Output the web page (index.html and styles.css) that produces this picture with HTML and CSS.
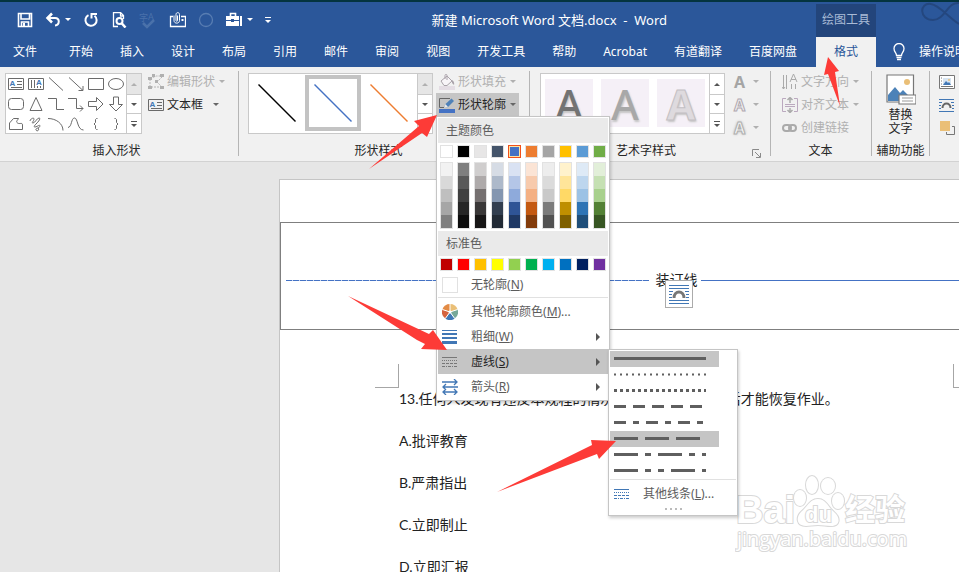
FILE: index.html
```html
<!DOCTYPE html>
<html lang="zh-CN">
<head>
  <meta charset="UTF-8">
  <title>新建 Microsoft Word 文档.docx - Word</title>
  <meta name="viewport" content="width=device-width, initial-scale=1.0">
  <link rel="stylesheet" href="styles.css">
</head>
<body>
  <header class="titlebar">
    <div class="quick-access">
      <button aria-label="保存"><svg width="16" height="16"><path d="M2 1.500h12.500v13H1.500V1.500z M4 2v5h8.500V2 M4.500 14v-4h7v4" fill="none" stroke="#fff" stroke-width="1.600"/><path d="M6 11h2v3H6z" fill="#fff"/></svg></button>
      <button aria-label="撤消"><svg width="16" height="16"><path d="M2.500 6H10c5 0 5 7 0 7.500" fill="none" stroke="#fff" stroke-width="2"/><path d="M7 1.500L2.500 6 7 10.500" fill="none" stroke="#fff" stroke-width="2.500"/></svg><i class="caret"></i></button>
      <button aria-label="重复"><svg width="16" height="16"><path d="M5.500 3.200a5.600 5.600 0 1 0 6 .6" fill="none" stroke="#fff" stroke-width="2"/><path d="M8.500 1v5.500M8 2h6" fill="none" stroke="#fff" stroke-width="2"/></svg></button>
      <button aria-label="打印预览"><svg width="16" height="16"><path d="M7 14.500H2.500v-14h7l3 3V7M9.500.500v3.500h3" fill="none" stroke="#fff" stroke-width="1.300"/><circle cx="8.500" cy="9" r="3" fill="none" stroke="#fff" stroke-width="2"/><path d="M10.500 11l4 4.500" stroke="#fff" stroke-width="2.500"/></svg></button>
      <button class="dim" aria-label="拼写检查"><svg width="18" height="18"><text x="0" y="10" font-size="9" fill="#587db2">字</text><text x="9" y="9" font-size="9" fill="#587db2">A</text><path d="M4 12l4 4 7-7" fill="none" stroke="#587db2" stroke-width="2.500"/></svg></button>
      <button aria-label="附件"><svg width="17" height="16"><path d="M4 4.500H1.500v10h15v-10H12" fill="none" stroke="#fff" stroke-width="1.300"/><path d="M5 3.500v5c0 3.500 5.500 3.500 5.500 0V2.500c0-2.500-3.500-2.500-3.500 0v6c0 1 1.500 1 1.500 0v-5" fill="none" stroke="#fff"/><path d="M12.500 7h2v2h-2z" fill="#fff"/></svg></button>
      <button aria-label="录制"><svg width="16" height="16"><circle cx="8" cy="8" r="6.500" fill="none" stroke="#587db2" stroke-width="1.300"/></svg></button>
      <button aria-label="工具箱"><svg width="17" height="16"><path d="M4.500 4V1.500h5V4" fill="none" stroke="#fff" stroke-width="1.600"/><path d="M0 4h13v4H8V7H5v1H0zM0 9h5v1h3V9h5v5H0zM14 4h2v10h-2z" fill="#fff"/></svg><i class="caret"></i></button>
      <button aria-label="自定义快速访问工具栏"><i class="more"></i></button>
    </div>
    <h1 class="doc-title">新建 Microsoft Word 文档.docx&nbsp; -&nbsp; Word</h1>
    <svg class="flourish" width="40" height="24"><path d="M40 1C28 0 26 18 14 18 0 18 0 0 12 2c8 1 16 12 28 20" fill="none" stroke="#24477f" stroke-width="2"/></svg>
  </header>

  <nav class="tabs">
    <button class="tab tab-file">文件</button>
    <button class="tab">开始</button>
    <button class="tab">插入</button>
    <button class="tab">设计</button>
    <button class="tab">布局</button>
    <button class="tab">引用</button>
    <button class="tab">邮件</button>
    <button class="tab">审阅</button>
    <button class="tab">视图</button>
    <button class="tab">开发工具</button>
    <button class="tab">帮助</button>
    <button class="tab">Acrobat</button>
    <button class="tab">有道翻译</button>
    <button class="tab">百度网盘</button>
    <div class="context">
      <span class="context-title">绘图工具</span>
      <button class="tab tab-active">格式</button>
    </div>
    <button class="tab tell-me"><svg width="12" height="18"><path d="M3.500 12.500c0-3-2.500-3.500-2.500-7a5 5 0 0 1 10 0c0 3.500-2.500 4-2.500 7zM3.500 14.500h5M4 16.500h4" fill="none" stroke="#fff" stroke-width="1.300"/></svg>操作说明搜索</button>
  </nav>

  <section class="ribbon">
    <div class="group group-first">
      <div class="group-body">
        <div class="gallery">
          <div class="shapes">
            <button aria-label="文本框"><svg width="16" height="16"><path d="M.500 2.500h15v11H.500zM9 5.500h5M9 8.500h5M3 11.500h11" class="ln"/><text x="1.500" y="10" class="mini">A</text></svg></button>
            <button aria-label="竖排文本框"><svg width="16" height="16"><path d="M.500 2.500h15v11H.500zM3.500 4v8M6.500 4v8M9.500 10v2M12.500 10v2" class="ln"/><text x="8" y="9" class="mini">A</text></svg></button>
            <button aria-label="直线"><svg width="16" height="16"><path d="M1 1.500l14 13" class="ln"/></svg></button>
            <button aria-label="箭头"><svg width="16" height="16"><path d="M1 1.500l14 13M15 10v4.500h-4.500" class="ln"/></svg></button>
            <button aria-label="矩形"><svg width="16" height="16"><path d="M.500 2.500h15v11H.500z" class="ln"/></svg></button>
            <button aria-label="椭圆"><svg width="16" height="16"><ellipse cx="8" cy="8" rx="7.500" ry="5.500" class="ln"/></svg></button>
            <button aria-label="圆角矩形"><svg width="16" height="16"><rect x=".500" y="2.500" width="15" height="11" rx="3" class="ln"/></svg></button>
            <button aria-label="三角形"><svg width="16" height="16"><path d="M8 1.500l6 13H2z" class="ln"/></svg></button>
            <button aria-label="肘形连接符"><svg width="16" height="16"><path d="M0 2.500h8.500v11H16" class="ln"/></svg></button>
            <button aria-label="肘形箭头"><svg width="16" height="16"><path d="M0 2.500h8.500v10H15M12 9.500l3 3-3 3" class="ln"/></svg></button>
            <button aria-label="右箭头"><svg width="16" height="16"><path d="M.500 5.500h8v-4L15 8l-6.500 6.500v-4h-8z" class="ln"/></svg></button>
            <button aria-label="下箭头"><svg width="16" height="16"><path d="M5.500 1v7.500h-4L8 15l6.500-6.500h-4V1z" class="ln"/></svg></button>
            <button aria-label="任意多边形"><svg width="16" height="16"><path d="M1.500 13.500V7l4-4.500h5c-1 2-3 3-1 4.500s5-1 5 2v4.500z" class="ln"/></svg></button>
            <button aria-label="自由曲线"><svg width="16" height="16"><path d="M2 5c0-2 4-4 4-2S3 7 5 7s4-5 6-5 0 3-2 5-4 4-2 4 5-3 5-1-5 2-4 4 4 0 2-2" class="ln"/></svg></button>
            <button aria-label="弧形"><svg width="16" height="16"><path d="M0 2.500c8 0 15 5 15 12" class="ln"/></svg></button>
            <button aria-label="曲线"><svg width="16" height="16"><path d="M0 11.500C4 11 3 2 6.500 2S9 14 15.500 14" class="ln"/></svg></button>
            <button aria-label="左大括号"><svg width="16" height="16"><path d="M9.500 2.500h-1l-1 1v3L6 8l1.500 1.500v3l1 1h1" class="ln"/></svg></button>
            <button aria-label="右大括号"><svg width="16" height="16"><path d="M6.500 2.500h1l1 1v3L10 8 8.500 9.500v3l-1 1h-1" class="ln"/></svg></button>
          </div>
          <div class="scroller"><button class="off" aria-label="上一行"><i class="up"></i></button><button aria-label="下一行"><i class="caret"></i></button><button aria-label="其他"><i class="more"></i></button></div>
        </div>
        <div class="tools">
          <button class="tool" disabled><svg width="16" height="16"><path d="M2 4.500L8.500 2H14M14 3L9 8l5 5M2 5v8h11" fill="none" stroke="#b5b5b5" stroke-dasharray="2 1"/><path d="M0 3h4v3H0zM4 0h3v3H4zM12 0h4v3h-4zM7 6h3v3H7zM0 12h4v3H0zM12 12h4v3h-4z" fill="#b0b0b0"/></svg><span>编辑形状</span><i class="caret"></i></button>
          <button class="tool"><svg width="16" height="16"><path d="M.500 2.500h15v11H.500zM9 5.500h5M9 8.500h5M3 11.500h11" class="ln"/><text x="1.500" y="10" class="mini">A</text></svg><span>文本框</span><i class="caret"></i></button>
        </div>
      </div>
      <div class="group-label"><span>插入形状</span></div>
    </div>
    <i class="sep"></i>

    <div class="group group-styles">
      <div class="group-body">
        <div class="gallery">
          <button class="line-style" aria-label="细线 - 深色"><svg width="40" height="40"><path d="M1.500 1.500l37 37" stroke="#000" stroke-width="1.400"/></svg></button>
          <button class="line-style picked" aria-label="细线 - 蓝色"><svg width="40" height="40"><path d="M1.500 1.500l37 37" stroke="#4472c4" stroke-width="1.400"/></svg></button>
          <button class="line-style" aria-label="细线 - 橙色"><svg width="40" height="40"><path d="M1.500 1.500l37 37" stroke="#ed7d31" stroke-width="1.400"/></svg></button>
          <div class="scroller"><button class="off" aria-label="上一行"><i class="up"></i></button><button aria-label="下一行"><i class="caret"></i></button><button aria-label="其他"><i class="more"></i></button></div>
        </div>
        <div class="tools">
          <button class="tool" disabled><svg width="16" height="16"><path d="M0 12h16v4H0z" fill="#e4dde4"/><path d="M2 7l6-5 5 5-5 4.500H5zM6 5V1.500c0-1.500 2-1.500 2 0V6" fill="#f8f5f8" stroke="#aaa3aa"/><path d="M13 6c2 1 2.500 3 2 5l-2-2z" fill="#aaa3aa"/></svg><span>形状填充</span><i class="caret"></i></button>
          <div class="outline">
            <button class="tool tool-open"><svg width="16" height="16"><path d="M11 1.500H.500v9H5" fill="none" stroke="#666"/><path d="M0 12h16v4H0z" fill="#4472c4"/><path d="M5 11l1.500-4 6-5.500 2.500 2.500-6 6z" fill="#4f81b8"/><path d="M5 11l1.500-4L9 10z" fill="#e8e8e8"/></svg><span>形状轮廓</span><i class="caret"></i></button>

            <div class="menu">
              <div class="menu-head">主题颜色</div>
              <div class="swatches" id="theme"></div>
              <div class="swatches shades" id="shades"></div>
              <div class="menu-head">标准色</div>
              <div class="swatches" id="standard"></div>
              <button class="menu-item"><i class="empty-box"></i><span>无轮廓(<u>N</u>)</span></button>
              <hr>
              <button class="menu-item"><svg width="16" height="16"><path d="M8 8V0a8 8 0 0 1 7.600 5.500z" fill="#eabf77"/><path d="M8 8l7.600-2.500a8 8 0 0 1-2.900 9z" fill="#77a898"/><path d="M8 8l4.700 6.500a8 8 0 0 1-9.400 0z" fill="#4177b5"/><path d="M8 8l-4.700 6.500a8 8 0 0 1-2.900-9z" fill="#d5633f"/><path d="M8 8L.400 5.500A8 8 0 0 1 8 0z" fill="#e38b45"/><path d="M8 8V0M8 8l7.600-2.500M8 8l4.700 6.500M8 8l-4.700 6.500M8 8L.400 5.500" stroke="#fff"/><circle cx="8" cy="8" r="1.500" fill="#fff"/></svg><span>其他轮廓颜色(<u>M</u>)...</span></button>
              <button class="menu-item"><svg width="16" height="16"><path d="M0 1h15v1H0zM0 4h15v2H0zM0 8h15v2H0zM0 12h15v3H0z" fill="#4177b5"/></svg><span>粗细(<u>W</u>)</span><i class="next"></i></button>
              <div class="dash-row">
                <button class="menu-item menu-item-open"><svg width="16" height="16"><path d="M0 3.500h15" stroke="#777"/><path d="M0 6.500h15" stroke="#777" stroke-dasharray="1 1"/><path d="M0 9.500h15" stroke="#777" stroke-dasharray="3 1"/><path d="M0 12.500h15" stroke="#777" stroke-dasharray="3 1 1 1"/></svg><span>虚线(<u>S</u>)</span><i class="next"></i></button>
                <div class="menu submenu">
                  <button class="dash dash-on" aria-label="实线"><svg width="92" height="4"><path d="M0 1.500h92"/></svg></button>
                  <button class="dash" aria-label="圆点"><svg width="92" height="4"><path d="M0 1.500h92" class="thin" stroke-dasharray="2 4"/></svg></button>
                  <button class="dash" aria-label="方点"><svg width="92" height="4"><path d="M0 1.500h92" stroke-dasharray="3 3"/></svg></button>
                  <button class="dash" aria-label="短划线"><svg width="92" height="4"><path d="M0 1.500h92" stroke-dasharray="12 7"/></svg></button>
                  <button class="dash" aria-label="划线-点"><svg width="92" height="4"><path d="M0 1.500h92" stroke-dasharray="12 7 6 7"/></svg></button>
                  <button class="dash dash-on" aria-label="长划线"><svg width="92" height="4"><path d="M0 1.500h92" stroke-dasharray="24 7"/></svg></button>
                  <button class="dash" aria-label="长划线-点"><svg width="92" height="4"><path d="M0 1.500h92" stroke-dasharray="24 7 6 7"/></svg></button>
                  <button class="dash" aria-label="长划线-点-点"><svg width="92" height="4"><path d="M0 1.500h92" stroke-dasharray="24 7 6 7 6 7"/></svg></button>
                  <hr>
                  <button class="menu-item"><svg width="16" height="16"><path d="M0 3.500h15" stroke="#4177b5"/><path d="M0 6.500h15" stroke="#4177b5" stroke-dasharray="1 1"/><path d="M0 9.500h15" stroke="#4177b5" stroke-dasharray="3 1"/><path d="M0 12.500h15" stroke="#4177b5" stroke-dasharray="3 1 1 1"/></svg><span>其他线条(<u>L</u>)...</span></button>
                  <div class="grip"></div>
                </div>
              </div>
              <button class="menu-item"><svg width="16" height="16"><path d="M0 3h15M1 8h15M1 13h14M12 0l3 3-3 3M4 5L1 8l3 3M12 10l3 3-3 3M4 10l-3 3 3 3" fill="none" stroke="#4177b5" stroke-width="1.300"/></svg><span>箭头(<u>R</u>)</span><i class="next"></i></button>
            </div>
          </div>
        </div>
      </div>
      <div class="group-label"><span>形状样式</span><i class="launcher"></i></div>
    </div>
    <i class="sep"></i>

    <div class="group group-art">
      <div class="group-body">
        <div class="gallery">
          <button class="art art-dark">A</button>
          <button class="art art-mid">A</button>
          <button class="art art-light">A</button>
          <div class="scroller"><button aria-label="上一行"><i class="up"></i></button><button aria-label="下一行"><i class="caret"></i></button><button aria-label="其他"><i class="more"></i></button></div>
        </div>
        <div class="tools">
          <button class="tool" disabled><b class="letter">A</b><i class="caret"></i></button>
          <button class="tool" disabled><b class="letter letter-line">A</b><i class="caret"></i></button>
          <button class="tool" disabled><b class="letter letter-glow">A</b><i class="caret"></i></button>
        </div>
      </div>
      <div class="group-label"><span>艺术字样式</span><i class="launcher"><svg width="9" height="9"><path d="M.500 7V.500H7M3 3l5 5M8.500 4v4.500H4" fill="none" stroke="#8a8a8a"/></svg></i></div>
    </div>
    <i class="sep"></i>

    <div class="group group-text">
      <div class="group-body">
        <div class="tools">
          <button class="tool" disabled><svg width="16" height="16"><path d="M1.500 1v14M4.500 1v14M9.500 10v5M13.500 10v5M0 13l1.500 2L3 13M8 8l3.500-8L15 8M9 5.500h5" fill="none" stroke="#aaa"/></svg><span>文字方向</span><i class="caret"></i></button>
          <button class="tool" disabled><svg width="16" height="16"><path d="M4 1.500H.500v13H4M12 1.500h3.500v13H12M3 7.500h10M3 9.500h10" fill="none" stroke="#bba9bf"/><path d="M8 0v6M5.500 3L8 .500 10.500 3M8 11v5M5.500 13L8 15.500l2.500-2.500" fill="none" stroke="#aaa" stroke-width="1.500"/></svg><span>对齐文本</span><i class="caret"></i></button>
          <button class="tool" disabled><svg width="16" height="16"><rect x="1" y="5" width="8" height="6" rx="3" fill="none" stroke="#aaa" stroke-width="2"/><rect x="7" y="5" width="7" height="6" rx="3" fill="none" stroke="#aaa" stroke-width="2"/></svg><span>创建链接</span></button>
        </div>
      </div>
      <div class="group-label"><span>文本</span></div>
    </div>
    <i class="sep"></i>

    <div class="group group-alt">
      <div class="group-body">
        <button class="big-tool"><svg width="30" height="32"><path d="M1 1h26.500v27H1z" fill="#fff" stroke="#777" stroke-width="1.200"/><circle cx="21" cy="8" r="3" fill="#eabf77"/><path d="M2 27v-6l7-8 5 6 3-3 5 5v6z" fill="#4c82b8"/><path d="M13 21h17v9H13z" fill="#fff" stroke="#777" stroke-width="1.200"/><path d="M16 24h11M16 27h11" stroke="#999"/></svg><span>替换<br>文字</span></button>
      </div>
      <div class="group-label"><span>辅助功能</span></div>
    </div>
    <i class="sep"></i>

    <div class="group group-arrange">
      <div class="group-body">
        <div class="tools">
          <button class="tool" aria-label="位置"><svg width="16" height="16"><path d="M.500 1.500h15v13H.500z" fill="#fff" stroke="#777"/><path d="M4 4h8v7H4z" fill="#d7e4f1"/><path d="M4 11l3-4 2 2 1-1 2 3z" fill="#4177b5"/><circle cx="10" cy="6" r="1" fill="#eabf77"/><path d="M2 4h1M2 7h1M2 10h1M2 12.500h12" stroke="#777"/></svg></button>
          <button class="tool" aria-label="环绕文字"><svg width="16" height="16"><path d="M0 2.500h15M0 5.500h3M12 5.500h3M0 8.500h2M13 8.500h2M0 11.500h2M13 11.500h2M0 14.500h15" stroke="#4177b5"/><path d="M3.500 11c0-6 8-6 8 0" fill="none" stroke="#666" stroke-width="2"/></svg></button>
          <button class="tool" aria-label="上移一层"><svg width="16" height="16"><path d="M1 1h10v10H1z" fill="#eabf77"/><path d="M13 6.500h2.500v8h-8V12" fill="none" stroke="#777"/></svg></button>
        </div>
      </div>
    </div>
  </section>

  <main class="workspace">
    <article class="page">
      <div class="seal">
        <i class="seal-dash"></i>
        <span class="seal-text">装订线<button class="layout-options" aria-label="布局选项"><svg width="20" height="20"><path d="M0 1.500h20M0 4.500h20M0 7.500h4M16 7.500h4M0 10.500h3M17 10.500h3M0 13.500h3M17 13.500h3M0 16.500h20M0 19.500h20" stroke="#4177b5"/><path d="M5 14c0-8 10-8 10 0" fill="none" stroke="#777" stroke-width="3"/></svg></button></span>
        <i class="seal-line"></i>
      </div>
      <div class="crop-marks"><i class="mark-left"></i><i class="mark-right"></i></div>
      <div class="question">
        <p>13.任何人发现有违反本规程的情况，应（&nbsp;&nbsp;），经纠正后才能恢复作业。</p>
        <p>A.批评教育</p>
        <p>B.严肃指出</p>
        <p>C.立即制止</p>
        <p>D.立即汇报</p>
      </div>
    </article>
  </main>

  <svg class="watermark" width="180" height="88">
    <g class="wm">
      <text x="1" y="55" class="wm-latin">Bai</text>
      <ellipse cx="65" cy="30" rx="6" ry="8"/><ellipse cx="77" cy="17" rx="6" ry="9"/><ellipse cx="93" cy="18" rx="7" ry="8"/><ellipse cx="103" cy="33" rx="6" ry="8"/>
      <path d="M83 31c8 0 10 8 16 13 7 6 6 14-3 14-5 0-8-1-13-1s-8 1-12 1c-10 0-10-9-5-14 7-6 9-13 17-13z"/>
      <text x="70" y="54" class="wm-du">du</text>
      <text x="110" y="52" class="wm-cjk">经验</text>
      <text x="2" y="78" class="wm-url">jingyan.baidu.com</text>
    </g>
  </svg>

  <svg class="arrows" width="959" height="572">
    <path d="M437 115L414 121l5 5-50 43 53-36 5 4z"/>
    <path d="M348 296l81 38 4-4 14 20-26-1 4-5-8-4z"/>
    <path d="M497 492l95-47-1-5 25 1-17 18-2-5z"/>
    <path d="M828 57l11 14-4 1 5 34-12-32-4 1z"/>
  </svg>

  <script>
    const theme = ['#ffffff', '#000000', '#e7e6e6', '#44546a', '#4472c4', '#ed7d31', '#a5a5a5', '#ffc000', '#5b9bd5', '#70ad47'];
    const standard = ['#c00000', '#ff0000', '#ffc000', '#ffff00', '#92d050', '#00b050', '#00b0f0', '#0070c0', '#002060', '#7030a0'];
    const shades = [
      ['#f2f2f2', '#d9d9d9', '#bfbfbf', '#a6a6a6', '#7f7f7f'],
      ['#7f7f7f', '#595959', '#404040', '#262626', '#0d0d0d'],
      ['#d0cece', '#aeaaaa', '#757070', '#3a3838', '#171616'],
      ['#d6dce5', '#adb9ca', '#8496b0', '#323e4f', '#222a35'],
      ['#d9e2f3', '#b4c6e7', '#8eaadb', '#2f5496', '#1f3864'],
      ['#fbe4d5', '#f7caac', '#f4b083', '#c45911', '#833c0b'],
      ['#ededed', '#dbdbdb', '#c9c9c9', '#7b7b7b', '#525252'],
      ['#fff2cc', '#ffe599', '#ffd966', '#bf8f00', '#7f6000'],
      ['#deeaf6', '#bdd6ee', '#9cc2e5', '#2e74b5', '#1f4e79'],
      ['#e2efd9', '#c5e0b3', '#a8d08d', '#538135', '#375623']
    ];

    function swatch(color) {
      const b = document.createElement('button');
      b.className = 'swatch';
      b.style.background = color;
      b.setAttribute('aria-label', color);
      return b;
    }

    theme.forEach(c => document.getElementById('theme').append(swatch(c)));
    standard.forEach(c => document.getElementById('standard').append(swatch(c)));
    document.getElementById('theme').children[4].classList.add('swatch-on');

    shades.forEach(list => {
      const col = document.createElement('div');
      col.className = 'shade-col';
      list.forEach(c => col.append(swatch(c)));
      document.getElementById('shades').append(col);
    });
  </script>
</body>
</html>
```

FILE: styles.css
```css
* {
  box-sizing: border-box;
}

body {
  margin: 0;
  height: 100vh;
  display: flex;
  flex-direction: column;
  overflow: hidden;
  position: relative;
  font-family: "Noto Sans", "Noto Sans CJK SC", sans-serif;
  font-size: 12px;
  line-height: 16px;
  color: #262626;
  background: #e6e6e6;
}

button {
  font: inherit;
  color: inherit;
  background: none;
  border: none;
  padding: 0;
  white-space: nowrap;
}

svg {
  display: block;
  flex: none;
}

.caret {
  border: 3px solid transparent;
  border-top-color: currentColor;
  border-bottom: none;
}

.up {
  border: 3px solid transparent;
  border-bottom-color: currentColor;
  border-top: none;
}

.more {
  border-top: 1px solid;
  padding-top: 2px;
}

.more::after {
  content: "";
  display: block;
  border: 3px solid transparent;
  border-top-color: currentColor;
  border-bottom: none;
}

/* title bar */
.titlebar {
  display: flex;
  align-items: center;
  flex: none;
  height: 37px;
  background: #2b579a;
  border-top: 2px solid #04343f;
  color: #fff;
  position: relative;
}

.quick-access {
  display: flex;
  align-items: center;
  gap: 12px;
  width: 45%;
  padding-left: 17px;
}

.quick-access button {
  display: flex;
  align-items: center;
  gap: 4px;
}

.dim {
  opacity: 0.7;
}

.doc-title {
  margin: 0;
  font-size: 13px;
  font-weight: normal;
}

.flourish {
  position: absolute;
  right: 0;
  top: 0;
}

/* tabs */
.tabs {
  display: flex;
  flex: none;
  gap: 1px;
  height: 30px;
  background: #2b579a;
  color: #fff;
}

.tab {
  flex: none;
  padding: 0 13px;
  height: 30px;
}

.tab-file {
  margin-right: 5px;
}

.context {
  position: relative;
  margin-left: 5px;
}

.context-title {
  position: absolute;
  bottom: 100%;
  left: 0;
  right: 0;
  height: 33px;
  line-height: 32px;
  text-align: center;
  white-space: nowrap;
  background: #23457b;
  color: #a9bbd6;
}

.tab-active {
  padding: 0 18px;
  background: #f1f1f1;
  color: #2b579a;
}

.tell-me {
  display: flex;
  align-items: center;
  gap: 14px;
  padding: 0 16px;
}

/* ribbon */
.ribbon {
  display: flex;
  flex: none;
  height: 95px;
  background: #f1f1f1;
  border-bottom: 1px solid #d2d2d2;
}

.group {
  display: flex;
  flex-direction: column;
  flex: none;
  padding: 3px 9px 0;
}

.group-first {
  padding: 3px 10px 0 5px;
}

.group-styles {
  padding: 3px 10px 0 9px;
}

.group-art {
  padding: 3px 8px 0 10px;
}

.group-text {
  padding: 3px 9px 0 8px;
}

.group-alt {
  padding: 3px 4px 0;
}

.group-body {
  display: flex;
  gap: 3px;
  height: 71px;
}

.group-art .group-body {
  gap: 6px;
}

.group-label {
  display: flex;
  line-height: 20px;
}

.group-label span {
  flex: 1;
  text-align: center;
}

.launcher {
  width: 10px;
  padding-top: 8px;
}

.sep {
  flex: none;
  width: 1px;
  margin: 4px 0 5px;
  background: #b5b5b5;
}

.gallery {
  display: flex;
  height: 61px;
  margin-top: 3px;
  background: #fff;
  border: 1px solid #c9c9c9;
}

.shapes {
  display: grid;
  grid-template-columns: repeat(6, 20px);
  grid-template-rows: repeat(3, 20px);
}

.shapes button {
  display: flex;
  align-items: center;
  justify-content: center;
}

.ln {
  fill: none;
  stroke: #6a6a6a;
}

.mini {
  font: bold 8px "Liberation Sans", sans-serif;
  fill: #4177b5;
}

.scroller {
  display: grid;
  grid-template-rows: 20px 19px 20px;
  width: 15px;
  margin-left: auto;
  border-left: 1px solid #c9c9c9;
  color: #555;
}

.scroller button {
  display: flex;
  align-items: center;
  justify-content: center;
}

.scroller button + button {
  border-top: 1px solid #c9c9c9;
}

.scroller .off {
  background: #e6e6e6;
  color: #b0b0b0;
}

.line-style {
  display: flex;
  align-items: center;
  justify-content: center;
  width: 56px;
  margin: 1px 0 2px;
}

.picked {
  border: 4px solid #c3c3c3;
}

.tools {
  display: flex;
  flex-direction: column;
}

.tool {
  display: flex;
  align-items: center;
  gap: 3px;
  height: 23px;
  padding: 0 3px;
}

.tool span {
  min-width: 42px;
  margin-right: 1px;
  text-align: left;
}

.tool .caret {
  color: #666;
}

.tool:disabled,
.tool:disabled .caret {
  color: #b0b0b0;
}

.tool-open {
  background: #c5c5c5;
}

.art {
  width: 48px;
  height: 48px;
  margin: 5px 4px;
  background: #f5f0f7;
  font: 500 42px/50px "Noto Sans", sans-serif;
  text-shadow: 1px 2px 2px #c4c4c4;
}

.art-dark {
  color: #737373;
}

.art-mid {
  color: #a8a8a8;
}

.art-light {
  color: #dedade;
  font-weight: 700;
  -webkit-text-stroke: 1px #c4c0c4;
}

.letter {
  width: 16px;
  font-size: 16px;
  color: #a5a5a5;
  text-align: left;
}

.letter-line {
  color: #f1f1f1;
  -webkit-text-stroke: 1px #b0a8b0;
}

.letter-glow {
  color: #f8f8f8;
  -webkit-text-stroke: 1px #b0b0b0;
  text-shadow: 0 0 3px #999;
}

.big-tool {
  display: flex;
  flex-direction: column;
  align-items: center;
  gap: 2px;
  width: 49px;
  padding-top: 4px;
  line-height: 14px;
}

.group-arrange .tool {
  padding: 0;
}

/* drop-down menus */
.outline,
.dash-row {
  position: relative;
}

.menu {
  position: absolute;
  top: 100%;
  left: 0;
  z-index: 2;
  width: 174px;
  padding: 1px;
  background: #fff;
  border: 1px solid #c5c5c5;
  box-shadow: 1px 2px 3px rgba(0, 0, 0, 0.2);
  color: #5c5c5c;
}

.menu hr {
  margin: 0 0 1px;
  border: none;
  border-top: 1px solid #e1e1e1;
}

.menu-head {
  height: 25px;
  padding-left: 8px;
  line-height: 25px;
  background: #eaeaea;
}

.swatches {
  display: flex;
  gap: 4px;
  padding: 2px 2px 4px;
}

.swatch {
  flex: none;
  width: 13px;
  height: 13px;
  border: 1px solid #e2e2e2;
}

.swatch-on {
  border-color: #f1511b;
  box-shadow: inset 0 0 0 1px #ffe2a0;
}

.shades {
  padding: 0 2px 2px;
}

.shade-col {
  display: flex;
  flex-direction: column;
  border: 1px solid #e2e2e2;
}

.shade-col .swatch {
  width: 11px;
  border: none;
}

#standard {
  padding-bottom: 1px;
}

.menu-item {
  display: flex;
  align-items: center;
  gap: 13px;
  width: 100%;
  height: 25px;
  padding: 0 8px 0 4px;
}

.menu-item-open {
  background: #c5c5c5;
  color: #262626;
}

.empty-box {
  width: 16px;
  height: 16px;
  border: 1px solid #e1e1e1;
}

.next {
  margin-left: auto;
  border: 4px solid transparent;
  border-left-color: #555;
  border-right: none;
}

.submenu {
  top: 0;
  left: 170px;
  width: 130px;
}

.dash {
  display: block;
  width: 109px;
  height: 16px;
  padding: 0 4px;
}

.dash-on {
  background: #c5c5c5;
}

.dash path {
  stroke: #5f5f5f;
  stroke-width: 3px;
}

.dash .thin {
  stroke-width: 2px;
}

.grip {
  width: 17px;
  height: 8px;
  margin: 0 auto;
  background: repeating-linear-gradient(90deg, #bbb 0 2px, transparent 2px 5px) 0 2px / 17px 2px no-repeat;
}

/* document */
.workspace {
  flex: 1;
  min-height: 0;
  padding: 17px 0 0 279px;
}

.page {
  height: 100%;
  background: #fff;
  border: 1px solid #c5c5c5;
  border-width: 1px 0 0 1px;
  font-family: Lato, "Noto Sans CJK SC", sans-serif;
  font-size: 14px;
  color: #222;
}

.seal {
  display: flex;
  align-items: center;
  height: 108px;
  margin-top: 42px;
  padding: 8px 0 0 5px;
  border: 1px solid #7f7f7f;
  border-right: none;
}

.seal-dash {
  flex: 0 0 54%;
  height: 1px;
  background: repeating-linear-gradient(90deg, #4472c4 0 6px, #c5d3ee 6px 7px);
}

.seal-text {
  position: relative;
  flex: none;
  margin: 0 4px 0 6px;
}

.layout-options {
  position: absolute;
  left: 10px;
  top: 8px;
  padding: 3px;
  background: #fff;
  border: 1px solid #ababab;
}

.seal-line {
  flex: 1;
  height: 1px;
  background: #4472c4;
}

.crop-marks {
  display: flex;
  justify-content: space-between;
  margin: 34px -18px 0 95px;
}

.mark-left,
.mark-right {
  width: 24px;
  height: 24px;
  border-bottom: 1px solid #a6a6a6;
}

.mark-left {
  border-right: 1px solid #a6a6a6;
}

.mark-right {
  border-left: 1px solid #a6a6a6;
}

.question {
  margin: -10px 0 0 119px;
}

.question p {
  margin: 0;
  line-height: 42px;
  white-space: nowrap;
}

/* watermark and pointer arrows */
.watermark {
  position: absolute;
  left: 735px;
  top: 468px;
}

.wm {
  fill: #fff;
  stroke: #d8d8d8;
  stroke-width: 2px;
  paint-order: stroke;
}

.wm-latin {
  font: bold 38px "Liberation Sans", sans-serif;
}

.wm-du {
  font: bold 22px "Liberation Sans", sans-serif;
}

.wm-cjk {
  font: bold 30px "Noto Sans CJK SC", sans-serif;
}

.wm-url {
  font: 20px "Open Sans", sans-serif;
}

.arrows {
  position: absolute;
  left: 0;
  top: 0;
  z-index: 3;
  fill: #fd3b37;
  pointer-events: none;
}
```
